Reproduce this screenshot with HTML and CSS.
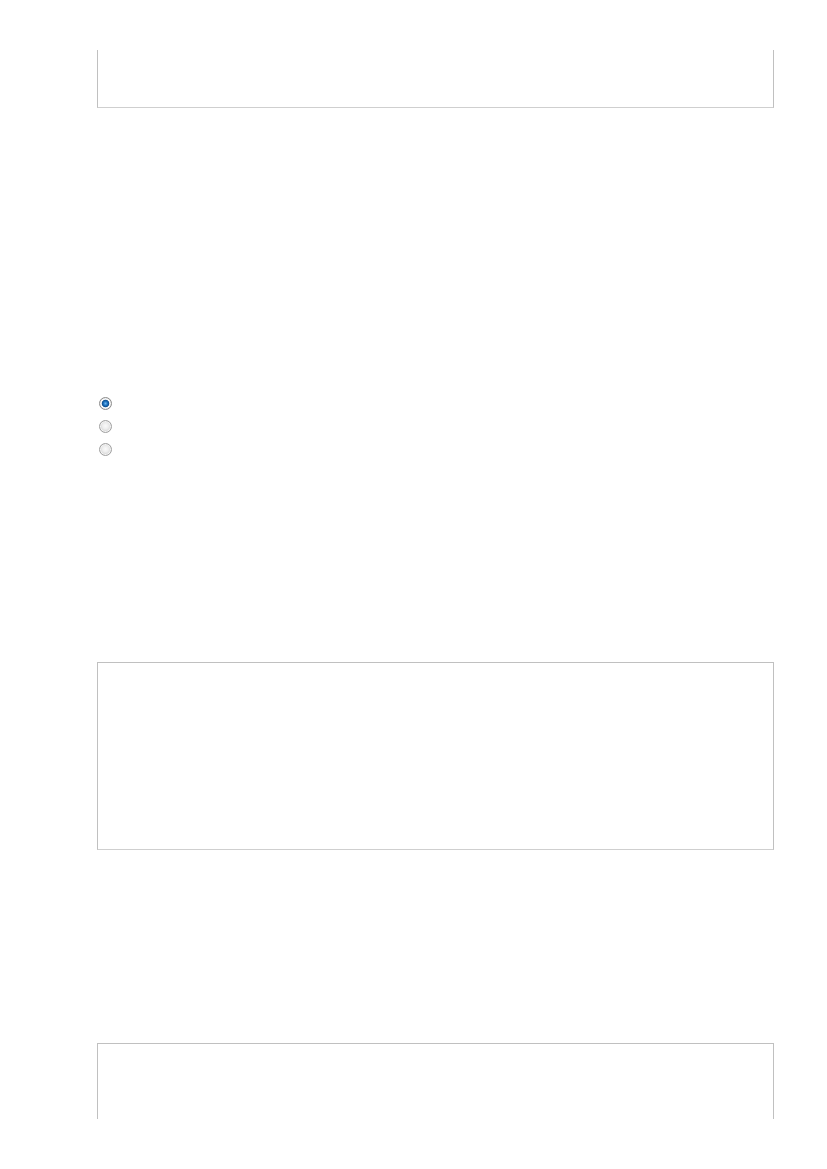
FILE: index.html
```html
<!DOCTYPE html>
<html lang="en">
<head>
    <meta charset="UTF-8">
    <meta name="viewport" content="width=device-width, initial-scale=1.0">
    <title>Form</title>
    <link rel="stylesheet" href="styles.css">
</head>
<body>
    <div class="sheet">
        <div class="field field-top"></div>
        <div class="options">
            <input type="radio" name="choice" class="radio" checked>
            <input type="radio" name="choice" class="radio">
            <input type="radio" name="choice" class="radio">
        </div>
        <div class="field field-mid"></div>
        <div class="field field-bottom"></div>
    </div>
</body>
</html>
```

FILE: styles.css
```css
body {
    margin: 0;
    padding: 0;
    background-color: #FFFFFF;
    font-family: 'Liberation Sans', Arial, sans-serif;
}
.sheet {
    width: 677px;
    height: 1069px;
    margin: 50px 0 0 97px;
    overflow: hidden;
}
.field {
    box-sizing: border-box;
    border: 1px solid #c0c0c0;
    border-bottom-color: #cfcfcf;
    background-color: #FFFFFF;
}
.field-top {
    height: 58px;
    border-top: none;
}
.options {
    display: flex;
    flex-direction: column;
    gap: 10px;
    margin: 289px 0 0 2px;
}
.radio {
    appearance: none;
    -webkit-appearance: none;
    box-sizing: border-box;
    width: 13px;
    height: 13px;
    margin: 0;
    border-radius: 50%;
    border: 1px solid #a0a0a0;
    background: radial-gradient(circle 6px at 50% 45%, #fafafa 0px, #eeeeee 3px, #d4d4d4 5.5px);
    box-shadow: inset 0 0 0 1px #f4f4f4;
}
.radio:checked {
    border-color: #8c8c8c;
    background: radial-gradient(circle 6px at 50% 50%, #6db4ec 0px, #1d72bf 2px, #0e4f8f 3.4px, #ffffff 4.2px, #f2f2f2 5px, #d8d8d8 6px);
    box-shadow: none;
}
.field-mid {
    height: 188px;
    margin-top: 206px;
}
.field-bottom {
    height: 200px;
    margin-top: 193px;
}
```
